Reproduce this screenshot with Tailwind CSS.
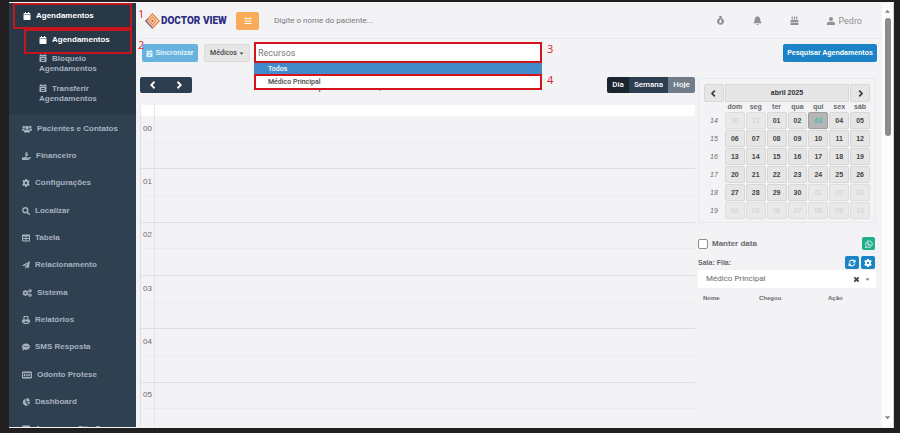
<!DOCTYPE html>
<html lang="pt-BR">
<head>
    <meta charset="UTF-8">
    <meta name="viewport" content="width=device-width, initial-scale=1.0">
    <title>Agendamentos - Doctor View</title>
    <script src="https://cdn.jsdelivr.net/npm/@tailwindcss/browser@4"></script>
</head>
<body class="h-screen overflow-hidden bg-[#211f20] pt-[2px] pr-[6px] pb-[5px] pl-[9px] font-['Liberation_Sans',sans-serif] text-[8px] leading-[10px] text-[#676a6c]">

    <!-- Icon sprite -->
    <svg class="hidden">
        <symbol id="i-cal" viewBox="0 0 448 512"><path d="M12 192h424c6.600 0 12 5.400 12 12v260c0 26.500-21.500 48-48 48H48c-26.500 0-48-21.500-48-48V204c0-6.600 5.400-12 12-12zm436-44v-36c0-26.500-21.500-48-48-48h-48V12c0-6.600-5.400-12-12-12h-40c-6.600 0-12 5.400-12 12v52H160V12c0-6.600-5.400-12-12-12h-40c-6.600 0-12 5.400-12 12v52H48C21.500 64 0 85.500 0 112v36c0 6.600 5.400 12 12 12h424c6.600 0 12-5.400 12-12z"/></symbol>
        <symbol id="i-cal-x" viewBox="0 0 16 16"><path fill-rule="evenodd" d="M3 2V0h2v2h6V0h2v2h1a1 1 0 0 1 1 1v2H1V3a1 1 0 0 1 1-1zM1 6h14v9a1 1 0 0 1-1 1H2a1 1 0 0 1-1-1zm4 2v6h6V8zm1 2h4v2H6z"/></symbol>
        <symbol id="i-cal-check" viewBox="0 0 16 16"><path fill-rule="evenodd" d="M3 2V0h2v2h6V0h2v2h1a1 1 0 0 1 1 1v2H1V3a1 1 0 0 1 1-1zM1 6h14v9a1 1 0 0 1-1 1H2a1 1 0 0 1-1-1zm3 5 3 3 5-5-1-1-4 4-2-2z"/></symbol>
        <symbol id="i-users" viewBox="0 0 20 16"><circle cx="10" cy="5" r="3.600"/><circle cx="3.500" cy="4" r="2.500"/><circle cx="16.500" cy="4" r="2.500"/><path d="M4 15v-2.500A3.500 3.500 0 0 1 7.500 9h5a3.500 3.500 0 0 1 3.500 3.500V15zM0 11.500V9.500A2.500 2.500 0 0 1 2.500 7H5l1 1c-1.500.600-2.500 2-2.500 3.500zM20 11.500V9.500A2.500 2.500 0 0 0 17.500 7H15l-1 1c1.500.600 2.500 2 2.500 3.500z"/></symbol>
        <symbol id="i-hand" viewBox="0 0 18 16"><path d="M8 0h2v1.500h1.500V3H8.500v1h3v4H10v1H8V8H6V6.500h3.500v-1H6.500v-4H8zM0 11h3l2-1h5.500a1 1 0 0 1 0 2H8v.500h4l4-2.500c1.500-.500 2.500 1 1.500 2L13 16H0z"/></symbol>
        <symbol id="i-gear" viewBox="0 0 16 16"><path fill-rule="evenodd" d="M6.300 0h3.400l.400 2.200 1.500.800 2.100-.800L15.400 5l-1.700 1.500v3l1.700 1.500-1.700 2.800-2.100-.800-1.500.800L9.700 16H6.300l-.400-2.200-1.500-.800-2.100.800L.600 11l1.700-1.500v-3L.600 5l1.700-2.800 2.100.800 1.500-.800zM8 5.700a2.300 2.300 0 1 0 0 4.600 2.300 2.300 0 0 0 0-4.600z"/></symbol>
        <symbol id="i-gears" viewBox="0 0 20 16"><path fill-rule="evenodd" d="M5.500 2h3l.300 1.700 1.200.700 1.600-.600L13 6.200l-1.300 1.200v1.400l1.300 1.100-1.400 2.400-1.600-.600-1.200.700-.300 1.700h-3l-.300-1.700-1.200-.700-1.600.600L1 9.900l1.300-1.100V7.400L1 6.200l1.400-2.400 1.600.600 1.200-.700zM7 6.200a1.900 1.900 0 1 0 0 3.800 1.900 1.900 0 0 0 0-3.800z"/><path fill-rule="evenodd" d="M16 0l1 1.200 1.600-.200.400 1.700 1 .800-.900 1.500-.600 1.500L17 6.300 16 7.400l-1.200-1-1.600-.200-.300-1.500-.900-1.200 1-.900.500-1.500 1.500.100zM16 2.700a1 1 0 1 0 0 2 1 1 0 0 0 0-2zM16 8.600l1 1.200 1.600-.200.400 1.700 1 .800-.900 1.500-.600 1.500-1.500-.200L16 16l-1.200-1-1.600-.200-.300-1.500-.900-1.200 1-.900.500-1.500 1.500.100zM16 11.300a1 1 0 1 0 0 2 1 1 0 0 0 0-2z"/></symbol>
        <symbol id="i-search" viewBox="0 0 16 16"><path d="M10.500 10.500 14.500 14.500" stroke="currentColor" stroke-width="3" stroke-linecap="round"/><circle cx="6.500" cy="6.500" r="5" fill="none" stroke="currentColor" stroke-width="2.800"/></symbol>
        <symbol id="i-table" viewBox="0 0 16 16"><path fill-rule="evenodd" d="M1.500 1h13A1.500 1.500 0 0 1 16 2.500v11a1.500 1.500 0 0 1-1.500 1.500h-13A1.500 1.500 0 0 1 0 13.500v-11A1.500 1.500 0 0 1 1.500 1zM2 5v3h5V5zm7 0v3h5V5zM2 10v3h5v-3zm7 0v3h5v-3z"/></symbol>
        <symbol id="i-plane" viewBox="0 0 16 16"><path d="M16 0 13.500 14.500 9 12.500 6.500 16v-4.500L13 4 4.500 10.500 0 8.800z"/></symbol>
        <symbol id="i-printer" viewBox="0 0 16 16"><path fill-rule="evenodd" d="M3 0h8.500L13 1.500V7h1a2 2 0 0 1 2 2v4h-3v3H3v-3H0V9a2 2 0 0 1 2-2h1zm2 2v5h6V3h-1.500V2zm0 9v3h6v-3z"/></symbol>
        <symbol id="i-comment" viewBox="0 0 16 16"><path fill-rule="evenodd" d="M8 1c4.400 0 8 2.700 8 6.200s-3.600 6.300-8 6.300c-1 0-2-.200-3-.500C4 14 2 15 0 15c1-1 1.700-2.300 1.800-3.500A5.700 5.700 0 0 1 0 7.200C0 3.700 3.600 1 8 1zM3.500 6.200v2h2v-2zm3.500 0v2h2v-2zm3.500 0v2h2v-2z"/></symbol>
        <symbol id="i-keyboard" viewBox="0 0 20 16"><path fill-rule="evenodd" d="M2 1h16a2 2 0 0 1 2 2v10a2 2 0 0 1-2 2H2a2 2 0 0 1-2-2V3a2 2 0 0 1 2-2zm0 3v8h16V4z"/><path d="M3.500 5.500H6v5H3.500zm3.700 0h2.300v5H7.200zm3.600 0h2.300v5h-2.300zm3.500 0h2.200v5h-2.200z"/></symbol>
        <symbol id="i-pie" viewBox="0 0 16 16"><path d="M7 1.500V9l5.300 5.300A7 7 0 1 1 7 1.500zM9 0a7 7 0 0 1 6.500 7H9zM9.500 8.500H16a7 7 0 0 1-2 4.500z"/></symbol>
        <symbol id="i-drop" viewBox="0 0 16 16"><path fill-rule="evenodd" d="M5.500 0h5v2H9.300v1.500A6.200 6.200 0 1 1 6.700 3.500V2H5.500zM8 5.500C7 7.500 5.800 8.500 5.800 10.300a2.200 2.200 0 0 0 4.400 0C10.200 8.500 9 7.500 8 5.500z"/></symbol>
        <symbol id="i-bell" viewBox="0 0 16 16"><path d="M7 0h2v1.200c2.500.500 4 2.300 4 4.800 0 3.500 1 4.500 2 5.500V13H1v-1.500c1-1 2-2 2-5.500 0-2.500 1.500-4.300 4-4.800zM6 14h4a2 2 0 0 1-4 0z"/></symbol>
        <symbol id="i-cake" viewBox="0 0 16 16"><path d="M3 1h2v5H3zm4 0h2v5H7zM11 1h2v5h-2zM1 7h14v3.800c-1.500.700-2.500 0-3.500-.700-1.300.900-2.300 1.200-3.500 0-1.200 1.200-2.200.900-3.500 0-1 .700-2 1.400-3.500.700zM1 12c1.500.500 2.500 0 3.500-.600 1.300 1 2.500 1 3.500 0 1 1 2.200 1 3.500 0 1 .600 2 1.100 3.500.600v4H1z"/></symbol>
        <symbol id="i-user" viewBox="0 0 16 16"><circle cx="8" cy="4" r="4"/><path d="M0 16v-2.500A4 4 0 0 1 4 9.500h8a4 4 0 0 1 4 4V16z"/></symbol>
        <symbol id="i-refresh" viewBox="0 0 16 16"><path d="M2.500 7A5.700 5.700 0 0 1 12.500 4.500M13.500 9a5.700 5.700 0 0 1-10 2.500" fill="none" stroke="currentColor" stroke-width="2.400"/><path d="M15 1v6H9zM1 15V9h6z"/></symbol>
        <symbol id="i-whats" viewBox="0 0 16 16"><path d="M1 15l1.200-3.700A6.500 6.500 0 1 1 5 14z" fill="none" stroke="currentColor" stroke-width="1.600"/><path d="M5.500 4.500 7 5l.300 1.500-.700.900c.500 1 1.200 1.500 2.200 2l.900-.800 1.600.700c0 1.500-1 2-2 2C6.500 11 4.500 8 4.600 6c0-.600.400-1.200.900-1.500z"/></symbol>
        <symbol id="i-left" viewBox="0 0 16 16"><path d="M11 1.500 4.500 8l6.500 6.500" fill="none" stroke="currentColor" stroke-width="3.600"/></symbol>
        <symbol id="i-right" viewBox="0 0 16 16"><path d="M5 1.500 11.500 8 5 14.500" fill="none" stroke="currentColor" stroke-width="3.600"/></symbol>
        <symbol id="i-caret" viewBox="0 0 16 16"><path d="M2 5h12l-6 7z"/></symbol>
        <symbol id="i-close" viewBox="0 0 16 16"><path d="m3 3 10 10M13 3 3 13" stroke="currentColor" stroke-width="4"/></symbol>
    </svg>

    <div class="relative flex h-full overflow-hidden border-y border-[#f3f3f4] bg-[#f3f3f5]">

        <!-- Sidebar -->
        <nav class="flex w-[127px] shrink-0 flex-col overflow-hidden bg-[#2f4050] font-bold text-[#a7b1c2]">
            <div class="h-[112px] shrink-0 bg-[#293846] px-1">
                <a href="#" class="flex h-[26px] items-center gap-[5px] border-2 border-[#c5161d] pl-2 text-white">
                    <svg class="size-2 fill-current"><use href="#i-cal"/></svg>Agendamentos
                </a>
                <a href="#" class="ml-[11px] flex h-[25px] items-center gap-[5px] border-2 border-[#c5161d] pb-1 pl-[13px] text-white">
                    <svg class="size-2 fill-current"><use href="#i-cal"/></svg>Agendamentos
                </a>
                <a href="#" class="ml-[26px] block pb-[10px]">
                    <svg class="mr-[5px] inline size-2 fill-current align-[-1px]"><use href="#i-cal-x"/></svg>Bloqueio<br>Agendamentos
                </a>
                <a href="#" class="ml-[26px] block">
                    <svg class="mr-[5px] inline size-2 fill-current align-[-1px]"><use href="#i-cal-x"/></svg>Transferir<br>Agendamentos
                </a>
            </div>
            <div class="grid h-[328px] shrink-0 auto-rows-fr items-center pl-[13px]">
                <a href="#" class="flex items-center gap-[5px]"><svg class="h-2 w-[10px] fill-current"><use href="#i-users"/></svg>Pacientes e Contatos</a>
                <a href="#" class="flex items-center gap-[5px]"><svg class="h-2 w-[9px] fill-current"><use href="#i-hand"/></svg>Financeiro</a>
                <a href="#" class="flex items-center gap-[5px]"><svg class="size-2 fill-current"><use href="#i-gear"/></svg>Configurações</a>
                <a href="#" class="flex items-center gap-[5px]"><svg class="size-2 fill-current"><use href="#i-search"/></svg>Localizar</a>
                <a href="#" class="flex items-center gap-[5px]"><svg class="size-2 fill-current"><use href="#i-table"/></svg>Tabela</a>
                <a href="#" class="flex items-center gap-[5px]"><svg class="size-2 fill-current"><use href="#i-plane"/></svg>Relacionamento</a>
                <a href="#" class="flex items-center gap-[5px]"><svg class="h-2 w-[10px] fill-current"><use href="#i-gears"/></svg>Sistema</a>
                <a href="#" class="flex items-center gap-[5px]"><svg class="size-2 fill-current"><use href="#i-printer"/></svg>Relatórios</a>
                <a href="#" class="flex items-center gap-[5px]"><svg class="size-2 fill-current"><use href="#i-comment"/></svg>SMS Resposta</a>
                <a href="#" class="flex items-center gap-[5px]"><svg class="h-2 w-[10px] fill-current"><use href="#i-keyboard"/></svg>Odonto Protese</a>
                <a href="#" class="flex items-center gap-[5px]"><svg class="size-2 fill-current"><use href="#i-pie"/></svg>Dashboard</a>
                <a href="#" class="flex items-center gap-[5px]"><svg class="size-2 fill-current"><use href="#i-table"/></svg>Anamnese Site Gr</a>
            </div>
        </nav>

        <!-- Content -->
        <div class="flex min-w-0 flex-1 flex-col pl-1">
            <header class="flex h-9 shrink-0 items-center border-b border-[#e7eaec] pr-5 pl-[5px]">
                <svg class="h-4 w-[15px] shrink-0" viewBox="0 0 30 32">
                    <path d="M15 2 28 16 15 30 2 16z" fill="none" stroke="#e98a45" stroke-width="3"/>
                    <path d="M15 30 2 16l4-4" fill="none" stroke="#8b6f8e" stroke-width="3"/>
                    <path d="m15 8 7 8-7 8-7-8z" fill="none" stroke="#e98a45" stroke-width="2.500"/>
                    <path d="M9 10l12 12M21 10 9 22" stroke="#f0b27a" stroke-width="1.500"/>
                    <path d="m15 13 3 3-3 3-3-3z" fill="#d9622b"/>
                </svg>
                <span class="ml-px w-[67px] shrink-0 font-['Roboto',sans-serif] text-[10px] font-black whitespace-nowrap text-[#2d2e83]">DOCTOR VIEW</span>
                <button aria-label="Menu" class="ml-2 flex h-[18px] w-[23px] shrink-0 items-center justify-center rounded-xs bg-[#f8ac59]">
                    <svg class="size-2" viewBox="0 0 16 16"><path d="M1 3h14M1 8h14M1 13h14" stroke="#fff" stroke-width="2"/></svg>
                </button>
                <input type="text" aria-label="Paciente" placeholder="Digite o nome do paciente..." class="ml-[15px] min-w-0 flex-1 font-['Roboto',sans-serif] text-[8px] outline-none placeholder:text-[#77797c]">
                <div class="flex items-center text-[#8f9194]">
                    <button aria-label="Alertas" class="mr-7"><svg class="block size-[9px] fill-current"><use href="#i-drop"/></svg></button>
                    <button aria-label="Notificações" class="mr-7"><svg class="block size-[9px] fill-current"><use href="#i-bell"/></svg></button>
                    <button aria-label="Aniversariantes" class="mr-7"><svg class="block size-[9px] fill-current"><use href="#i-cake"/></svg></button>
                    <a href="#" class="flex items-center gap-[3px] font-['Roboto',sans-serif] text-[9px]"><svg class="size-2 fill-current"><use href="#i-user"/></svg>Pedro</a>
                </div>
            </header>

            <div class="flex h-[26px] shrink-0 items-start pt-[3px] pr-[5px] pl-[2px]">
                <button class="mt-[2px] flex h-[18px] w-[56px] items-center justify-center gap-[2px] rounded-xs bg-[#68b2df] text-[7px] font-bold text-[#e4f3fb]">
                    <svg class="size-[7px] fill-current"><use href="#i-cal-check"/></svg>Sincronizar
                </button>
                <button class="mt-[2px] ml-[6px] flex h-[18px] w-[46px] items-center justify-center gap-[2px] rounded-xs border border-[#dcdcdc] bg-[#e6e6e6] font-['Roboto',sans-serif] text-[7px] font-medium text-[#444]">
                    Médicos<svg class="size-[5px] fill-current"><use href="#i-caret"/></svg>
                </button>

                <!-- Resource combobox, list open -->
                <div class="relative z-10 ml-1 h-[21px] w-[288px]">
                    <input type="text" aria-label="Recursos" placeholder="Recursos" class="h-full w-full border-2 border-[#d2141c] bg-white pl-[2px] font-['Roboto',sans-serif] text-[9px] outline-none placeholder:text-[#77797c]">
                    <ul class="absolute top-full right-0 left-0 font-['Roboto',sans-serif] text-[7px] font-medium">
                        <li><button class="block h-[11px] w-full bg-[#428bca] pl-[14px] text-left text-white">Todos</button></li>
                        <li><button class="block h-4 w-full border-2 border-[#d2141c] bg-white pl-3 text-left text-[#444]">Médico Principal</button></li>
                    </ul>
                </div>
                <button class="mt-[2px] ml-auto h-[18px] w-[94px] rounded-xs bg-[#1c84c6] text-[7px] font-bold text-white">Pesquisar Agendamentos</button>
            </div>

            <div class="flex min-h-0 flex-1 gap-[3px] pr-[6px]">

                <!-- Day view -->
                <main class="flex min-w-0 flex-1 flex-col pt-3">
                    <div class="flex h-7 shrink-0 items-start justify-between">
                        <div class="flex overflow-hidden rounded-xs bg-[#2c3e50] text-white">
                            <button aria-label="Anterior" class="flex h-4 w-[26px] items-center justify-center"><svg class="size-2"><use href="#i-left"/></svg></button>
                            <button aria-label="Próximo" class="flex h-4 w-[26px] items-center justify-center"><svg class="size-2"><use href="#i-right"/></svg></button>
                        </div>
                        <h2 class="pt-[3px] font-['Open_Sans',sans-serif] text-[12px]">quinta-feira, 3 de abril de 2025</h2>
                        <div class="flex overflow-hidden rounded-xs font-['Roboto',sans-serif] font-medium text-white">
                            <button class="h-4 w-[22px] bg-[#1a252f]">Dia</button>
                            <button class="h-4 w-[39px] bg-[#2c3e50]">Semana</button>
                            <button class="h-4 w-[27px] bg-[#707c88]">Hoje</button>
                        </div>
                    </div>
                    <div class="h-[11px] shrink-0 border-l border-[#e4e4e6] bg-white"><div class="h-full w-[14px] border-r border-[#e4e4e6]"></div></div>
                    <div class="min-h-0 flex-1 overflow-hidden">
                        <div id="slots" class="grid h-[320px] auto-rows-fr"></div>
                    </div>
                </main>

                <!-- Right column -->
                <aside class="w-[178px] shrink-0 pt-[13px]">
                    <table class="w-full table-fixed border-separate border-spacing-px border border-[#e7eaec] px-1 pt-1 pb-[2px] text-center text-[7px]">
                        <thead>
                            <tr class="h-[18px] font-bold text-[#333]">
                                <th class="rounded-xs border border-[#d8d8d8] bg-[#e6e6e6]"><button aria-label="Mês anterior" class="block w-full"><svg class="mx-auto size-[7px]"><use href="#i-left"/></svg></button></th>
                                <th colspan="6" class="border border-[#d8d8d8] bg-[#e6e6e6]">abril 2025</th>
                                <th class="rounded-xs border border-[#d8d8d8] bg-[#e6e6e6]"><button aria-label="Próximo mês" class="block w-full"><svg class="mx-auto size-[7px]"><use href="#i-right"/></svg></button></th>
                            </tr>
                            <tr class="h-2 leading-[8px]"><th></th><th>dom</th><th>seg</th><th>ter</th><th>qua</th><th>qui</th><th>sex</th><th>sáb</th></tr>
                        </thead>
                        <tbody id="days"></tbody>
                    </table>

                    <div class="flex items-center justify-between pt-[14px]">
                        <label class="flex items-center gap-1 font-bold">
                            <input type="checkbox" class="size-[10px] appearance-none rounded-xs border border-[#8c8c8c] bg-white">Manter data
                        </label>
                        <button aria-label="WhatsApp" class="mr-px flex size-[13px] items-center justify-center rounded-xs bg-[#1fae8a] text-white"><svg class="size-2 fill-current"><use href="#i-whats"/></svg></button>
                    </div>
                    <div class="flex items-center justify-between pt-[6px]">
                        <label for="fila" class="text-[7px] font-bold">Sala: Fila:</label>
                        <div class="mr-px flex gap-[2px] text-white">
                            <button aria-label="Atualizar" class="flex h-[13px] w-[14px] items-center justify-center rounded-xs bg-[#1c84c6]"><svg class="size-2 fill-current"><use href="#i-refresh"/></svg></button>
                            <button aria-label="Configurar" class="flex h-[13px] w-[14px] items-center justify-center rounded-xs bg-[#1c84c6]"><svg class="size-2 fill-current"><use href="#i-gear"/></svg></button>
                        </div>
                    </div>
                    <div class="mt-px flex h-[18px] items-center bg-white pr-[6px]">
                        <select id="fila" class="h-full min-w-0 flex-1 appearance-none pl-2 font-['Roboto',sans-serif] text-[8px] outline-none">
                            <option>Médico Principal</option>
                        </select>
                        <button aria-label="Limpar"><svg class="block size-[7px] text-[#444]"><use href="#i-close"/></svg></button>
                        <svg class="ml-[5px] size-[5px] fill-current"><use href="#i-caret"/></svg>
                    </div>
                    <table class="mt-[5px] w-full table-fixed text-left text-[6px]">
                        <thead><tr><th class="w-[61px] pl-[5px]">Nome</th><th class="w-[69px]">Chegou</th><th>Ação</th></tr></thead>
                    </table>
                </aside>
            </div>
        </div>

        <!-- Page scrollbar -->
        <div class="flex w-3 shrink-0 flex-col items-center border-r border-[#d4d4d4] bg-[#fcfcfc] pt-[5px] pb-[6px] text-[#858585]">
            <svg class="size-[7px] rotate-180 fill-current"><use href="#i-caret"/></svg>
            <div class="mt-[3px] h-[118px] w-[6px] rounded-full bg-[#8b8b8b]"></div>
            <svg class="mt-auto size-[7px] fill-current"><use href="#i-caret"/></svg>
        </div>

        <!-- Step markers -->
        <div class="font-['Open_Sans',sans-serif] text-[11px] text-[#e0222a]">
            <span class="absolute top-[6px] left-[129px]">1</span>
            <span class="absolute top-[37px] left-[129px]">2</span>
            <span class="absolute top-[41px] left-[538px]">3</span>
            <span class="absolute top-[72px] left-[538px]">4</span>
        </div>
    </div>

    <script>
        // Hour slots, two half hours each
        const slots = document.getElementById('slots');
        for (let h = 0; h < 6; h++) {
            slots.innerHTML += `
                <div class="flex border-b border-l border-[#dfdfe1]">
                    <div class="flex w-[14px] flex-col border-r border-[#e4e4e6] text-center">
                        <div class="flex flex-1 items-center justify-center border-b border-[#ececee]">0${h}</div>
                        <div class="flex-1"></div>
                    </div>
                    <div class="flex flex-1 flex-col">
                        <div class="flex-1 border-b border-dotted border-[#e4e4e6]"></div>
                        <div class="flex-1"></div>
                    </div>
                </div>`;
        }

        // April 2025, starting on Sunday 30 March
        const days = document.getElementById('days');
        const date = new Date(2025, 2, 30);
        for (let week = 14; week < 20; week++) {
            let row = `<tr class="h-[17px]"><td class="italic">${week}</td>`;
            for (let d = 0; d < 7; d++) {
                let css = 'rounded-xs border border-[#d8d8d8] bg-[#e6e6e6] font-bold text-[#444]';
                if (date.getMonth() !== 3) css = 'rounded-xs border border-[#dedede] bg-[#e9e9e9] text-[#cfcfcf]';
                else if (date.getDate() === 3) css = 'rounded-xs border border-[#9c9c9c] bg-[#b5b5b5] font-bold text-[#3fbfb0]';
                row += `<td class="${css}">${String(date.getDate()).padStart(2, '0')}</td>`;
                date.setDate(date.getDate() + 1);
            }
            days.innerHTML += row + '</tr>';
        }
    </script>
</body>
</html>
